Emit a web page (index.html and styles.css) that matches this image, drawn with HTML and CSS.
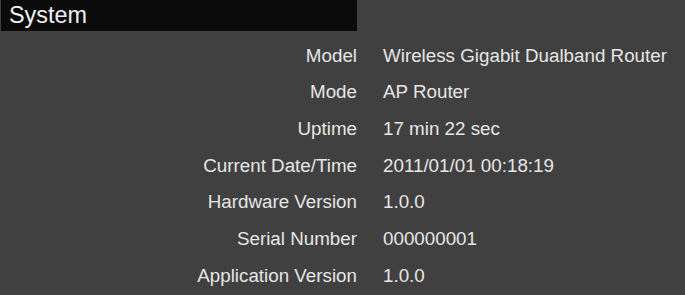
FILE: index.html
```html
<!DOCTYPE html>
<html lang="en">
<head>
  <meta charset="UTF-8">
  <title>System</title>
  <link rel="stylesheet" href="styles.css">
</head>
<body>
  <div class="panel">
    <h1 class="panel-title">System</h1>
    <dl class="info">
      <dt>Model</dt><dd>Wireless Gigabit Dualband Router</dd>
      <dt>Mode</dt><dd>AP Router</dd>
      <dt>Uptime</dt><dd>17 min 22 sec</dd>
      <dt>Current Date/Time</dt><dd>2011/01/01 00:18:19</dd>
      <dt>Hardware Version</dt><dd>1.0.0</dd>
      <dt>Serial Number</dt><dd>000000001</dd>
      <dt>Application Version</dt><dd>1.0.0</dd>
    </dl>
  </div>
</body>
</html>
```

FILE: styles.css
```css
/* Dark router admin look */
body {
  margin: 0;
  padding: 0;
  background: #404040;
  font-family: "Liberation Sans", Arial, sans-serif;
  color: #e6e6e6;
}
.panel {
  width: 685px;
}
/* Black heading strip */
.panel-title {
  margin: 0 0 0 1px;
  width: 348px;
  padding-left: 8px;
  background: #0b0b0b;
  color: #f2f2f2;
  font-size: 23.4px;
  font-weight: normal;
  line-height: 31px;
}
/* Label / value rows */
.info {
  margin: 6.5px 0 0;
  display: grid;
  grid-template-columns: 357px 1fr;
  grid-auto-rows: 36.7px;
  font-size: 18.8px;
  line-height: 36.7px;
}
.info dt {
  text-align: right;
}
.info dd {
  margin: 0;
  padding-left: 26px;
}
```
